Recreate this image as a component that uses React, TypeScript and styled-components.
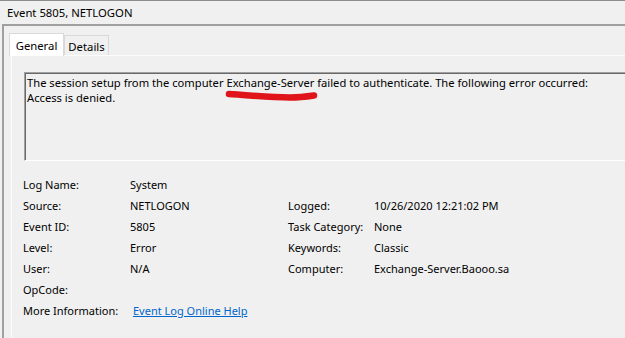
import React from 'react';
import styled, { createGlobalStyle } from 'styled-components';

const GlobalStyle = createGlobalStyle`
  html, body {
    margin: 0;
    padding: 0;
    background: #f0f0f0;
    overflow: hidden;
  }
  body {
    font-family: "Noto Sans", "Liberation Sans", sans-serif;
    font-size: 11px;
    color: #000;
  }
`;

const Window = styled.div`
  width: 625px;
  height: 338px;
  overflow: hidden;
  border-top: 1px solid #8c8c8c;
  box-sizing: border-box;
  display: flex;
  flex-direction: column;
`;

const TitleBar = styled.div`
  height: 23px;
  padding-left: 7px;
  font-size: 11.3px;
  display: flex;
  align-items: center;
  flex-shrink: 0;
`;

const Body = styled.div`
  flex: 1;
  margin-left: 2px;
  border-top: 2px solid #a0a0a0;
  border-left: 2px solid #a0a0a0;
  padding-left: 5px;
  display: flex;
  flex-direction: column;
`;

const TabStrip = styled.div`
  display: flex;
  align-items: flex-end;
  padding-top: 7px;
  height: 22px;
  position: relative;
  z-index: 1;
`;

const Tab = styled.div<{ $active?: boolean }>`
  box-sizing: border-box;
  display: flex;
  align-items: center;
  justify-content: center;
  font-size: 11.3px;
  width: ${({ $active }) => ($active ? '55px' : '45px')};
  height: ${({ $active }) => ($active ? '23px' : '20px')};
  margin-bottom: ${({ $active }) => ($active ? '-1px' : '0')};
  background: ${({ $active }) => ($active ? '#ffffff' : '#f0f0f0')};
  border: 1px solid #d9d9d9;
  border-bottom: none;
  padding-top: ${({ $active }) => ($active ? '0' : '2px')};
`;

const Panel = styled.div`
  flex: 1;
  border-top: 1px solid #fcfcfc;
  border-left: 1px solid #fcfcfc;
  margin-left: 2px;
  padding: 16px 0 0 12px;
  display: flex;
  flex-direction: column;
`;

const MessageBox = styled.div`
  position: relative;
  box-sizing: border-box;
  width: 620px;
  height: 89px;
  border: 1px solid;
  border-color: #a0a0a0 #ffffff #ffffff #a0a0a0;
  box-shadow: inset 1px 1px 0 #696969;
  padding: 2px 0 0 2px;
  font-size: 11.2px;
  line-height: 15px;
  flex-shrink: 0;
`;

const MessageLine = styled.div`
  white-space: nowrap;
`;

const Scribble = styled.svg`
  position: absolute;
  left: -1px;
  top: -1px;
  pointer-events: none;
`;

const Fields = styled.div`
  display: grid;
  grid-template-columns: 107px 158px 86px 1fr;
  grid-auto-rows: 21px;
  margin-top: 13px;
  margin-left: -1px;
  align-items: center;
`;

const Cell = styled.span`
  white-space: nowrap;
`;

const HelpLink = styled.a`
  color: #0066cc;
  text-decoration: underline;
  margin-left: 3px;
  cursor: pointer;
`;

type Row = { label: string; value?: React.ReactNode; label2?: string; value2?: string };

const rows: Row[] = [
  { label: 'Log Name:', value: 'System' },
  { label: 'Source:', value: 'NETLOGON', label2: 'Logged:', value2: '10/26/2020 12:21:02 PM' },
  { label: 'Event ID:', value: '5805', label2: 'Task Category:', value2: 'None' },
  { label: 'Level:', value: 'Error', label2: 'Keywords:', value2: 'Classic' },
  { label: 'User:', value: 'N/A', label2: 'Computer:', value2: 'Exchange-Server.Baooo.sa' },
  { label: 'OpCode:' },
  { label: 'More Information:', value: <HelpLink>Event Log Online Help</HelpLink> },
];

export default function App() {
  return (
    <Window>
      <GlobalStyle />
      <TitleBar>Event 5805, NETLOGON</TitleBar>
      <Body>
        <TabStrip>
          <Tab $active>General</Tab>
          <Tab>Details</Tab>
        </TabStrip>
        <Panel>
          <MessageBox>
            <MessageLine>
              The session setup from the computer Exchange-Server failed to authenticate. The following error occurred:
            </MessageLine>
            <MessageLine>Access is denied.</MessageLine>
            <Scribble width="620" height="89" viewBox="24 71 620 89">
              <path
                d="M229 93 C 248 94, 268 96.5, 290 96.5 C 300 96.5, 307 95.5, 314 94.5"
                fill="none"
                stroke="#e0141b"
                strokeWidth="6.5"
                strokeLinecap="round"
              />
            </Scribble>
          </MessageBox>
          <Fields>
            {rows.map((r) => (
              <React.Fragment key={r.label}>
                <Cell>{r.label}</Cell>
                <Cell>{r.value}</Cell>
                <Cell>{r.label2}</Cell>
                <Cell>{r.value2}</Cell>
              </React.Fragment>
            ))}
          </Fields>
        </Panel>
      </Body>
    </Window>
  );
}
